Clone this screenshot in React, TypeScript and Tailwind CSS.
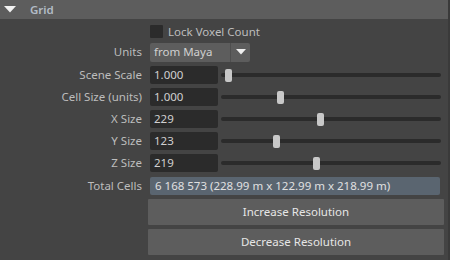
import React from "react";

const font = { fontFamily: '"Noto Sans", "DejaVu Sans", sans-serif' };

function Label({ children }: { children: React.ReactNode }) {
  return (
    <div className="w-[143px] shrink-0 text-right pr-[1px] text-[#bdbdbd]">{children}</div>
  );
}

function Field({ value }: { value: string }) {
  return (
    <div className="w-[68px] h-[18px] rounded-[2px] bg-[#2b2b2b] text-[#d0d0d0] pl-[4px] flex items-center leading-none">
      {value}
    </div>
  );
}

function Slider({ pos }: { pos: number }) {
  return (
    <div className="relative w-[220px] h-[13px] ml-[3px] flex items-center">
      <div className="w-full h-[4px] rounded-full bg-[#2b2b2b]" />
      <div
        className="absolute top-0 w-[7px] h-[13px] rounded-[2px] bg-[#c8c8c8]"
        style={{ left: pos }}
      />
    </div>
  );
}

function SliderRow({ label, value, pos }: { label: string; value: string; pos: number }) {
  return (
    <div className="h-[22px] flex items-center gap-[7px]">
      <Label>{label}</Label>
      <div className="flex items-center">
        <Field value={value} />
        <Slider pos={pos} />
      </div>
    </div>
  );
}

export default function App() {
  return (
    <div className="w-[450px] h-[260px] bg-[#444444] text-[11.5px] overflow-hidden flex" style={font}>
      <div className="flex-1 flex flex-col">
        <div className="h-[19px] bg-[#5d5d5d] flex items-center">
          <svg width="12" height="7" viewBox="0 0 12 7" className="ml-[4px] mt-[-1px]">
            <polygon points="0,0 12,0 6,6.5" fill="#f2f2f2" />
          </svg>
          <span className="ml-[14px] text-[#b3bcc6] font-semibold">Grid</span>
        </div>
        <div className="h-[3px]" />
        <div className="h-[19px] flex items-center gap-[7px]">
          <div className="w-[143px] shrink-0" />
          <div className="w-[13px] h-[13px] bg-[#2b2b2b] rounded-[1px]" />
          <span className="ml-[-2px] text-[#bdbdbd]">Lock Voxel Count</span>
        </div>
        <div className="h-[22px] flex items-center gap-[7px]">
          <Label>Units</Label>
          <div className="flex h-[19px] w-[100px]">
            <div className="w-[80px] bg-[#5d5d5d] rounded-l-[2px] text-[#d0d0d0] pl-[4px] flex items-center">from Maya</div>
            <div className="w-[20px] bg-[#5d5d5d] border-l border-[#4f4f4f] rounded-r-[2px] flex items-center justify-center">
              <svg width="10" height="6" viewBox="0 0 10 6">
                <polygon points="0,0 10,0 5,5.5" fill="#efefef" />
              </svg>
            </div>
          </div>
        </div>
        <div className="h-[1px]" />
        <SliderRow label="Scene Scale" value="1.000" pos={4} />
        <SliderRow label="Cell Size (units)" value="1.000" pos={56} />
        <SliderRow label="X Size" value="229" pos={96} />
        <SliderRow label="Y Size" value="123" pos={52} />
        <SliderRow label="Z Size" value="219" pos={92} />
        <div className="h-[23px] flex items-center gap-[7px]">
          <Label>Total Cells</Label>
          <div className="w-[290px] h-[18px] rounded-[2px] bg-[#5a6570] text-[#e0e0e0] pl-[5px] flex items-center">
            6 168 573 (228.99 m x 122.99 m x 218.99 m)
          </div>
        </div>
        <div className="pl-[148px] pr-[4px] flex flex-col gap-[4px] mt-[2px]">
          <div className="h-[26px] bg-[#5d5d5d] rounded-[1px] flex items-center justify-center text-[#e6e6e6]">
            Increase Resolution
          </div>
          <div className="h-[26px] bg-[#5d5d5d] rounded-[1px] flex items-center justify-center text-[#e6e6e6]">
            Decrease Resolution
          </div>
        </div>
      </div>
      <div className="w-[2px] bg-[#3a3a3a]" />
    </div>
  );
}
